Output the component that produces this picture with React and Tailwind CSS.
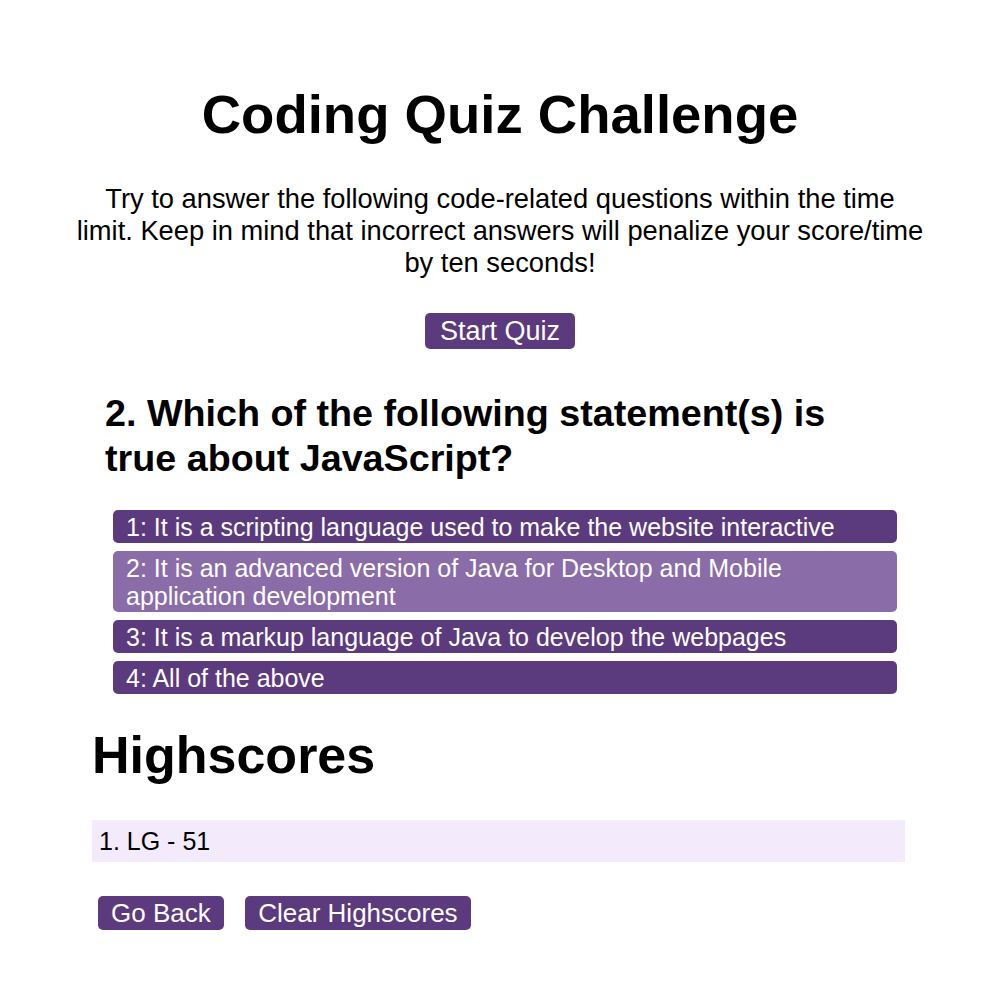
import React, { useState } from "react";

const question = {
  title: "2. Which of the following statement(s) is true about JavaScript?",
  answers: [
    "1: It is a scripting language used to make the website interactive",
    "2: It is an advanced version of Java for Desktop and Mobile application development",
    "3: It is a markup language of Java to develop the webpages",
    "4: All of the above",
  ],
};

const scores = [{ initials: "LG", score: 51 }];

export default function App() {
  const [hovered, setHovered] = useState(1);

  return (
    <main className="min-h-screen bg-white pt-[84px] font-['Liberation_Sans',Arial,sans-serif] text-black">
      <header className="flex flex-col items-center text-center">
        <h1 className="text-[54.5px] font-bold leading-[62px]">Coding Quiz Challenge</h1>
        <p className="mt-[37px] w-[849px] text-[27.3px] leading-[32px]">
          Try to answer the following code-related questions within the time limit. Keep in mind that incorrect answers
          will penalize your score/time by ten seconds!
        </p>
        <button className="mt-[34px] rounded-[5px] bg-[#5c3a7e] px-[15px] py-[3px] text-[27px] leading-[30px] text-white">
          Start Quiz
        </button>
      </header>

      <section className="mx-auto mt-[42px] w-[800px]">
        <h2 className="ml-[5px] w-[740px] text-[37.7px] font-bold leading-[45px]">{question.title}</h2>
        <ul className="ml-[13px] mr-[3px] mt-[29px] flex flex-col gap-[8px]">
          {question.answers.map((a, i) => (
            <li key={a}>
              <button
                onMouseEnter={() => setHovered(i)}
                className={
                  "w-full rounded-[5px] px-[13px] py-[2.5px] text-left text-[25px] leading-[28px] text-white " +
                  (hovered === i ? "bg-[#8a6ca8]" : "bg-[#5c3a7e]")
                }
              >
                {a}
              </button>
            </li>
          ))}
        </ul>
      </section>

      <section className="ml-[92px] mt-[32px] w-[813px]">
        <h1 className="text-[52px] font-bold leading-[59px]">Highscores</h1>
        <ol className="mt-[35px]">
          {scores.map((s, i) => (
            <li key={s.initials} className="bg-[#f3eafc] px-[7px] py-[7px] text-[25px] leading-[28px]">
              {i + 1}. {s.initials} - {s.score}
            </li>
          ))}
        </ol>
        <div className="ml-[6px] mt-[34px] flex gap-[21px]">
          <button className="rounded-[5px] bg-[#5c3a7e] px-[13px] py-[2px] text-[26px] leading-[30px] text-white">
            Go Back
          </button>
          <button className="rounded-[5px] bg-[#5c3a7e] px-[13.5px] py-[2px] text-[26px] leading-[30px] text-white">
            Clear Highscores
          </button>
        </div>
      </section>
    </main>
  );
}
